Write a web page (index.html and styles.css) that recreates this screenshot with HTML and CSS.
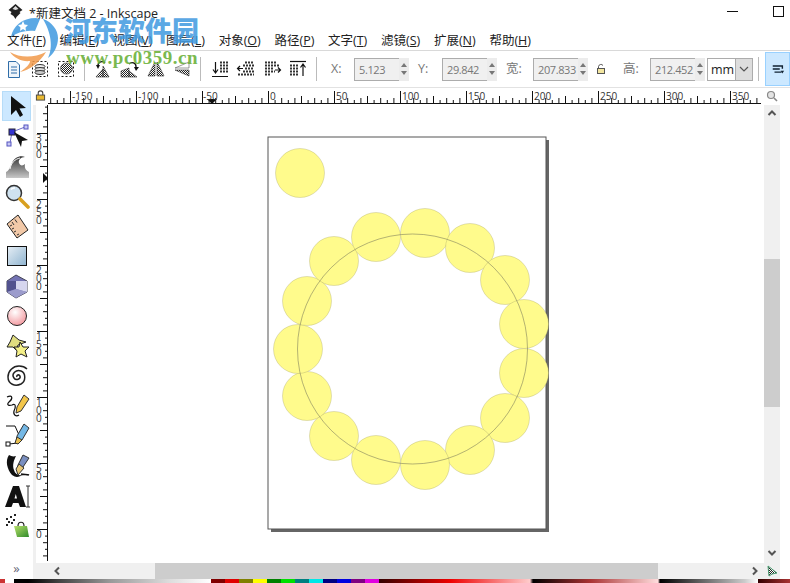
FILE: index.html
```html
<!DOCTYPE html>
<html lang="zh">
<head>
<meta charset="utf-8">
<title>新建文档 2 - Inkscape</title>
<link rel="stylesheet" href="styles.css">
</head>
<body>
<svg class="defs" width="0" height="0" aria-hidden="true">
  <defs>
    <pattern id="dith" width="2" height="2" patternUnits="userSpaceOnUse"><rect width="2" height="2" fill="#fff"/><rect width="1" height="1" fill="#222"/><rect x="1" y="1" width="1" height="1" fill="#222"/></pattern>
    <pattern id="hticks" x="268" y="88" width="66" height="17" patternUnits="userSpaceOnUse">
      <path d="M.5 3V16M7.100 12V16M13.700 10V16M20.300 12V16M26.900 10V16M33.500 8V16M40.100 12V16M46.700 10V16M53.300 12V16M59.900 10V16" stroke="#111" fill="none"/>
    </pattern>
    <pattern id="vticks" x="33" y="133" width="15" height="66" patternUnits="userSpaceOnUse">
      <path d="M4 .5H15M12 7.100H15M10 13.700H15M12 20.300H15M10 26.900H15M7 33.500H15M12 40.100H15M10 46.700H15M12 53.300H15M10 59.900H15" stroke="#111" fill="none"/>
    </pattern>
    <linearGradient id="rectg" x1="0" y1="0" x2="1" y2="1"><stop offset="0" stop-color="#e6eef5"/><stop offset="1" stop-color="#8fb4d0"/></linearGradient>
    <radialGradient id="ballg" cx=".4" cy=".3" r=".8"><stop offset="0" stop-color="#fff"/><stop offset="1" stop-color="#f28f96"/></radialGradient>
    <linearGradient id="waveg" x1="0" y1="0" x2="0" y2="1"><stop offset="0" stop-color="#333"/><stop offset="1" stop-color="#c8c8c8"/></linearGradient>
    <linearGradient id="bagg" x1="0" y1="0" x2="1" y2="1"><stop offset="0" stop-color="#b6e06a"/><stop offset="1" stop-color="#2f8a2a"/></linearGradient>
  </defs>
</svg>
<div class="app">
  <header class="titlebar">
    <svg class="applogo" viewBox="0 0 16 15"><path d="M8 0 15 6 12 8 13 9 9 13 8 15 6 12 3 10 4 8 1 6Z" fill="#222"/><path d="M5 5 8 2 11 5 8 6Z" fill="#ddd"/></svg>
    <span class="title">*新建文档 2 - Inkscape</span>
    <span class="winbtns"><i class="win-min"></i><i class="win-max"></i></span>
  </header>
  <nav class="menubar">
    <span class="menu">文件(<u>F</u>)</span>
    <span class="menu">编辑(<u>E</u>)</span>
    <span class="menu">视图(<u>V</u>)</span>
    <span class="menu">图层(<u>L</u>)</span>
    <span class="menu">对象(<u>O</u>)</span>
    <span class="menu">路径(<u>P</u>)</span>
    <span class="menu">文字(<u>T</u>)</span>
    <span class="menu">滤镜(<u>S</u>)</span>
    <span class="menu">扩展(<u>N</u>)</span>
    <span class="menu">帮助(<u>H</u>)</span>
  </nav>
  <div class="toolbar">
    <span class="tb"><svg viewBox="0 0 20 20"><path d="M4.500 2.500H12L15.500 6V18.500H4.500Z" fill="#eef4fa" stroke="#2f6da8"/><path d="M7 8H13M7 11H13M7 14H13" stroke="#2f6da8"/></svg></span>
    <span class="tb"><svg viewBox="0 0 20 20"><rect x="2.500" y="2.500" width="15" height="15" fill="none" stroke="#111" stroke-dasharray="2 2"/><ellipse cx="10" cy="7.500" rx="5" ry="2" fill="#eee" stroke="#333"/><ellipse cx="10" cy="10.500" rx="5" ry="2" fill="#ddd" stroke="#333"/><ellipse cx="10" cy="13.500" rx="5" ry="2" fill="#ccc" stroke="#333"/></svg></span>
    <span class="tb"><svg viewBox="0 0 20 20"><rect x="2.500" y="2.500" width="15" height="15" fill="none" stroke="#111" stroke-dasharray="2 2"/><ellipse cx="10.500" cy="9.500" rx="6" ry="5.500" fill="url(#dith)" stroke="#777"/></svg></span>
    <span class="tsep"></span>
    <span class="tb"><svg viewBox="0 0 22 20"><path d="M3 18 10 10V18Z M10 7 16 18H10Z" fill="url(#dith)" stroke="#333" stroke-width=".6"/><path d="M5 7A4 4 0 0 1 12 4" fill="none" stroke="#111" stroke-width="1.300"/><path d="M3 6H7L5 10Z" fill="#111"/></svg></span>
    <span class="tb"><svg viewBox="0 0 22 20"><path d="M2 18V12L10 9V18Z M10 12 18 18H10Z" fill="url(#dith)" stroke="#333" stroke-width=".6"/><path d="M10 5A4 4 0 0 1 17 8" fill="none" stroke="#111" stroke-width="1.300"/><path d="M15 8H20L17 12Z" fill="#111"/></svg></span>
    <span class="tb"><svg viewBox="0 0 20 20"><path d="M2 17 9 3V17Z" fill="url(#dith)" stroke="#333" stroke-width=".6"/><path d="M11 3 18 17H11Z" fill="url(#dith)" stroke="#333" stroke-width=".6"/></svg></span>
    <span class="tb"><svg viewBox="0 0 20 20"><path d="M3 9 17 3V9Z" fill="#fff" stroke="#555" stroke-width=".6"/><path d="M3 11 17 17V11Z" fill="url(#dith)" stroke="#333" stroke-width=".6"/></svg></span>
    <span class="tsep"></span>
    <span class="tb"><svg viewBox="0 0 20 20"><path d="M5.500 3V13M3 10.500 5.500 14 8 10.500M2 17.500H18" stroke="#111" fill="none" stroke-width="1.200"/><path d="M10 3.500H18M10 6.500H18M10 9.500H18M10 12.500H18" stroke="#333" stroke-width="2" stroke-dasharray="2 1"/></svg></span>
    <span class="tb"><svg viewBox="0 0 20 20"><path d="M7 9.500H2M4 7 1.500 9.500 4 12" stroke="#111" fill="none" stroke-width="1.200"/><path d="M9 3.500H18M7 6.500H18M9 9.500H18M7 12.500H18M2 15.500H18" stroke="#333" stroke-width="2" stroke-dasharray="2 1"/></svg></span>
    <span class="tb"><svg viewBox="0 0 20 20"><path d="M3 3.500H15M3 6.500H17M3 9.500H12M3 12.500H13M3 15.500H9" stroke="#333" stroke-width="2" stroke-dasharray="2 1"/><path d="M13 11H18M16 8.500 18.500 11 16 13.500" stroke="#111" fill="none" stroke-width="1.200"/></svg></span>
    <span class="tb"><svg viewBox="0 0 20 20"><path d="M2 2.500H18" stroke="#111" stroke-width="1.200"/><path d="M2 6.500H11M2 9.500H11M2 12.500H11M2 15.500H11" stroke="#333" stroke-width="2" stroke-dasharray="2 1"/><path d="M15 17V6M12.500 8.500 15 5 17.500 8.500" stroke="#111" fill="none" stroke-width="1.200"/></svg></span>
    <span class="tsep"></span>
    <span class="lbl lbl-x">X:</span>
    <span class="field">5.123</span><span class="spin"><i class="up"></i><i class="down"></i></span>
    <span class="lbl lbl-y">Y:</span>
    <span class="field">29.842</span><span class="spin"><i class="up"></i><i class="down"></i></span>
    <span class="lbl lbl-w">宽:</span>
    <span class="field">207.833</span><span class="spin"><i class="up"></i><i class="down"></i></span>
    <span class="lock"><svg viewBox="0 0 12 12"><path d="M3.500 5V3.500A2.500 2.500 0 0 1 8 2.500" fill="none" stroke="#555"/><rect x="2.500" y="5.500" width="7" height="5" fill="#f3e6a0" stroke="#555"/></svg></span>
    <span class="lbl lbl-h">高:</span>
    <span class="field">212.452</span><span class="spin"><i class="up"></i><i class="down"></i></span>
    <span class="combo"><span class="combo-val">mm</span><span class="combo-arrow"><svg viewBox="0 0 10 6"><path d="M1 1 5 5 9 1" fill="none" stroke="#555" stroke-width="1.200"/></svg></span></span>
    <span class="tsep tsep-end"></span>
    <span class="tb-active"><svg viewBox="0 0 16 14"><path d="M2 3H13V6M2 6.500H10M4 10H12" stroke="#123" stroke-width="1.600" fill="none"/><path d="M11 8.500H15L13 11.500Z" fill="#123"/></svg></span>
  </div>
  <main class="main">
    <aside class="toolbox">
      <span class="tool tool-active"><svg viewBox="0 0 26 26"><path d="M7 3V22L12 17 16 24 19 22 15.500 15.500 22 15Z" fill="#111"/></svg></span>
      <span class="tool"><svg viewBox="0 0 26 26"><path d="M8 9 6 20M8 9 21 4" stroke="#6a6ac8" fill="none"/><rect x="5" y="6" width="6" height="6" fill="#3434d0" stroke="#223"/><rect x="20" y="2" width="4" height="4" fill="#c8c8f4" stroke="#5555c0"/><rect x="3" y="19" width="4" height="4" fill="#c8c8f4" stroke="#5555c0"/><path d="M10 9 24 17 18 18 17 24Z" fill="#111"/></svg></span>
      <span class="tool"><svg viewBox="0 0 26 26"><path d="M2 25V19C5 18 6 14 8 10 10 5 16 2 21 4 17 4 14 7 15 10 16 13 19 13 21 11 20 16 23 18 25 19V25Z" fill="url(#waveg)"/><path d="M6 16C7 10 11 6 16 5" fill="none" stroke="#fff"/></svg></span>
      <span class="tool"><svg viewBox="0 0 26 26"><circle cx="10" cy="10" r="7.500" fill="#cfe2f0" stroke="#333" stroke-width="1.500"/><path d="M7 6.500A4.500 4.500 0 0 1 11 5" stroke="#fff" stroke-width="1.500" fill="none"/><path d="M16 16 24 24" stroke="#d8a020" stroke-width="3.600" stroke-linecap="round"/></svg></span>
      <span class="tool"><svg viewBox="0 0 26 26"><path d="M3 11 14 2 24 17 13 25Z" fill="#f2c9a8" stroke="#222"/><path d="M6 13 8 12M8 16 10 15M10 19 12 18M13 22 15 21M8 9 10 12M11 6.500 13 9.500" stroke="#333"/></svg></span>
      <span class="tool"><svg viewBox="0 0 26 26"><rect x="3.500" y="3.500" width="19" height="19" fill="url(#rectg)" stroke="#111"/></svg></span>
      <span class="tool"><svg viewBox="0 0 26 26"><path d="M12 2 23 8V19L12 25 3 19V8Z" fill="#7474b4" stroke="#445"/><path d="M12 8 23 8V19L12 16Z" fill="#d6d6ee"/><path d="M3 8 12 8V16L3 19Z" fill="#52528e"/><path d="M12 16 23 19 12 25 3 19Z" fill="#9c9ccc"/></svg></span>
      <span class="tool"><svg viewBox="0 0 26 26"><circle cx="13" cy="13" r="9.500" fill="url(#ballg)" stroke="#222"/></svg></span>
      <span class="tool"><svg viewBox="0 0 26 26"><path d="M9 2 15 7 22 9 14 12 12 17 9 14 3 14 6 9Z" fill="#e0dd80" stroke="#222"/><path d="M16 9 19 14 25 14 21 18 23 24 17 21 12 24 13 18 10 14 15 14Z" fill="#f4f088" stroke="#222"/></svg></span>
      <span class="tool"><svg viewBox="0 0 26 26"><path d="M13 14C12 12 15 11 16 13 17 16 12 18 10 15 7 11 12 6 17 8 22 10 22 18 17 21 11 24 4 21 4 14 4 8 9 3 15 3 18 3 21 4 23 6" fill="none" stroke="#222" stroke-width="1.500"/></svg></span>
      <span class="tool"><svg viewBox="0 0 26 26"><path d="M3 4C9 1 9 6 5 9 2 12 5 13 8 12 12 10 12 14 10 18 9 22 12 24 15 22" fill="none" stroke="#111" stroke-width="1.200"/><path d="M20 2 25 6 17 18 12 20 13 14Z" fill="#f3c64a" stroke="#333"/></svg></span>
      <span class="tool"><svg viewBox="0 0 26 26"><path d="M2 3H11L15 12 14 20M5 21 14 20" fill="none" stroke="#111"/><rect x="2" y="19" width="4" height="4" fill="#fff" stroke="#111"/><path d="M20 1 25 5 18 17 12 20 13 13Z" fill="#74b8e6" stroke="#333"/><path d="M13 14 18 17 14 21 11 20Z" fill="#e8c050" stroke="#333"/></svg></span>
      <span class="tool"><svg viewBox="0 0 26 26"><path d="M5 2C1 8 3 16 8 22 12 25 15 24 19 22 14 23 11 21 10 17 8 12 10 7 12 3 9 4 7 3 5 2Z" fill="#111"/><path d="M19 2 25 5 19 14 14 18 14 12Z" fill="#7a8fc0" stroke="#333"/><path d="M15 11 20 15 14 22 12 16Z" fill="#e8c878" stroke="#333"/><path d="M17 21C20 22 23 21 25 22" fill="none" stroke="#111" stroke-width="1.500"/></svg></span>
      <span class="tool"><svg viewBox="0 0 26 26"><path d="M1 24 9 3H15L22 24H16L14.500 20H9L7.500 24ZM10.500 15.500H13L11.800 11Z" fill="#111" fill-rule="evenodd"/><path d="M22 3H26M24 3V24M22 24H26" stroke="#333" fill="none"/></svg></span>
      <span class="tool"><svg viewBox="0 0 26 26"><path d="M10 13H23L25 24 13 24Z" fill="url(#bagg)"/><path d="M14 13C14 8 20 8 20 13" fill="none" stroke="#222" stroke-width="1.200"/><path d="M2 6H4M6 4H8M4 9H6M9 7H11M7 10H9M2 12H4M10 2H12" stroke="#222" stroke-width="1.800"/></svg></span>
      <span class="tool-more">&raquo;</span>
    </aside>
    <div class="workspace">
      <svg class="lockicon" viewBox="0 0 12 12"><path d="M3.500 6V3.500A2.500 2.500 0 0 1 8.500 3.500V6" fill="none" stroke="#444" stroke-width="1.200"/><rect x="1.500" y="5.500" width="9" height="5.500" fill="#e8b830" stroke="#444"/></svg>
      <svg class="hruler" viewBox="48 88 716 17">
        <rect x="48" y="88" width="713" height="16" fill="url(#hticks)"/>
        <path d="M48 103.500H761" stroke="#111"/>
        <path d="M207 99H217L212 104Z" fill="#111"/>
        <g class="rtext">
          <text x="72" y="100">-150</text><text x="138" y="100">-100</text><text x="203" y="100">-50</text><text x="270" y="100">0</text><text x="336" y="100">50</text><text x="402" y="100">100</text><text x="468" y="100">150</text><text x="534" y="100">200</text><text x="600" y="100">250</text><text x="666" y="100">300</text><text x="732" y="100">350</text>
        </g>
      </svg>
      <span class="zoomicon"><svg viewBox="0 0 12 12"><circle cx="5" cy="5" r="3.500" fill="#e4e4e4" stroke="#888" stroke-width="1.200"/><path d="M8 8 11 11" stroke="#888" stroke-width="1.600"/></svg></span>
      <svg class="vruler" viewBox="33 105 15 458">
        <rect x="33" y="105" width="15" height="456" fill="url(#vticks)"/>
        <path d="M47.500 105V561" stroke="#111"/>
        <path d="M43 173 48 178 43 183Z" fill="#111"/>
        <g class="rtext rtext-v">
          <text x="36 36 36" y="142 150 158">300</text>
          <text x="36 36 36" y="208 216 224">250</text>
          <text x="36 36 36" y="274 282 290">200</text>
          <text x="36 36 36" y="340 348 356">150</text>
          <text x="36 36 36" y="406 414 422">100</text>
          <text x="36 36" y="472 480">50</text>
          <text x="36" y="538">0</text>
        </g>
      </svg>
      <svg class="canvas" viewBox="48 105 716 458">
        <rect x="271" y="140" width="278" height="392" fill="#666"/>
        <rect x="268" y="137" width="278" height="392" fill="#fff" stroke="#555"/>
        <g class="dots">
          <circle cx="300" cy="173" r="24.500"/>
          <circle cx="425" cy="233" r="24.500"/><circle cx="470" cy="248" r="24.500"/><circle cx="505" cy="280" r="24.500"/><circle cx="524" cy="324" r="24.500"/><circle cx="524" cy="373" r="24.500"/><circle cx="505" cy="418" r="24.500"/><circle cx="470" cy="450" r="24.500"/><circle cx="425" cy="465" r="24.500"/><circle cx="376" cy="460" r="24.500"/><circle cx="334" cy="436" r="24.500"/><circle cx="307" cy="396" r="24.500"/><circle cx="298" cy="349" r="24.500"/><circle cx="307" cy="301" r="24.500"/><circle cx="334" cy="261" r="24.500"/><circle cx="376" cy="237" r="24.500"/>
        </g>
        <circle class="ring" cx="412.500" cy="349" r="115"/>
      </svg>
      <div class="vscroll">
        <svg class="arrow" viewBox="0 0 10 8"><path d="M1.500 6 5 2.500 8.500 6" fill="none" stroke="#555" stroke-width="2"/></svg>
        <span class="vtrack"><i class="vthumb"></i></span>
        <svg class="arrow" viewBox="0 0 10 8"><path d="M1.500 2 5 5.500 8.500 2" fill="none" stroke="#555" stroke-width="2"/></svg>
      </div>
      <div class="hscroll">
        <svg class="harrow" viewBox="0 0 8 10"><path d="M6 1.500 2.500 5 6 8.500" fill="none" stroke="#555" stroke-width="2"/></svg>
        <span class="htrack"><i class="hthumb"></i></span>
        <svg class="harrow" viewBox="0 0 8 10"><path d="M2 1.500 5.500 5 2 8.500" fill="none" stroke="#555" stroke-width="2"/></svg>
      </div>
      <span class="corner"><svg viewBox="0 0 12 12"><path d="M2 1 11 8 6 9 3 11Z" fill="url(#dith)" stroke="#4a9a70"/></svg></span>
    </div>
  </main>
  <div class="palette"></div>
  <div class="watermark">
    <svg class="wm-logo" viewBox="0 0 60 75"><path d="M11 37C13 26 22 18 36 18L40 19 35 31C26 30 18 32 11 37Z" fill="#3f9ae0"/><path d="M43 19C52 22 58 30 58 38 58 46 54 54 48 58 52 50 53 36 43 19Z" fill="#3f9ae0"/><path d="M23 21 24.500 24.500 28 25 25.500 27.500 26 31 23 29 20 31 20.500 27.500 18 25 21.500 24.500Z" fill="#fff"/><path d="M10 52C20 58 34 58 46 52 40 62 30 70 20 72 26 68 30 64 30 61 22 62 14 58 10 52Z" fill="#f19a4a"/></svg>
    <span class="wm-cn">河东软件园</span>
    <span class="wm-url">www.pc0359.cn</span>
  </div>
</div>
</body>
</html>
```
FILE: styles.css
```css
* { box-sizing: border-box; }
html, body { margin: 0; padding: 0; }
body { background: #fff; font-family: "Open Sans", "Noto Sans CJK SC", sans-serif; color: #111; overflow: hidden; }
.defs { position: absolute; }
.app { position: relative; width: 790px; height: 583px; display: flex; flex-direction: column; overflow: hidden; }

.titlebar { height: 26px; display: flex; align-items: center; padding-left: 7px; }
.applogo { width: 17px; height: 15px; margin-top: -3px; }
.title { margin-left: 5px; font-size: 12.500px; margin-top: -1px; color: #222; white-space: nowrap; }
.winbtns { margin-left: auto; display: flex; align-items: center; margin-top: -3px; }
.win-min { display: block; width: 11px; height: 1px; background: #111; margin-right: 35px; }
.win-max { display: block; width: 11px; height: 11px; border: 1px solid #111; margin-right: 6px; }

.menubar { height: 25px; display: flex; align-items: center; gap: 13.700px; padding: 2px 0 0 7px; border-bottom: 1px solid #d9d9d9; font-size: 12.500px; }
.menu { white-space: nowrap; color: #222; }
.menu u { text-underline-offset: 1px; }

.toolbar { height: 37px; display: flex; align-items: center; padding-left: 1px; border-bottom: 1px solid #e2e2e2; font-size: 13px; }
.tb { width: 26px; height: 24px; display: flex; align-items: center; justify-content: center; }
.tb svg { width: 22px; height: 20px; }
.tsep { width: 1px; height: 24px; background: #bbb; margin: 0 6px 0 5px; }
.lbl { color: #777; display: block; height: 20px; line-height: 20px; font-size: 12.500px; }
.lbl-x { width: 31px; padding-left: 8px; }
.lbl-y { width: 33px; padding-left: 9px; }
.lbl-w { width: 36px; padding-left: 9px; white-space: nowrap; }
.lbl-h { width: 27px; white-space: nowrap; }
.field { width: 45px; height: 23px; line-height: 21px; padding-left: 4px; background: #f0f0f0; border: 1px solid #acacac; border-right: 0; color: #777; font-size: 11px; letter-spacing: -.4px; overflow: hidden; white-space: nowrap; }
.spin { width: 10px; height: 23px; display: flex; flex-direction: column; background: #ececec; align-items: center; justify-content: space-around; padding: 3px 0; }
.spin i { display: block; width: 0; height: 0; border-left: 3px solid transparent; border-right: 3px solid transparent; }
.spin .up { border-bottom: 4px solid #777; }
.spin .down { border-top: 4px solid #777; }
.lock { width: 35px; height: 14px; padding-left: 7px; display: flex; }
.lock svg { width: 12px; height: 12px; margin-top: 1px; }
.combo { margin-left: 2px; width: 46px; height: 23px; display: flex; border: 1px solid #acacac; background: #fff; }
.combo-val { width: 27px; line-height: 21px; padding-left: 3px; font-size: 12.500px; color: #222; }
.combo-arrow { flex: 1; background: #ddd; border-left: 1px solid #acacac; display: flex; align-items: center; justify-content: center; }
.combo-arrow svg { width: 10px; height: 6px; }
.tsep-end { margin: 0 6px 0 5px; }
.tb-active { flex: 1; height: 34px; background: #cce8ff; border: 1px solid #99d1ff; display: flex; align-items: center; justify-content: center; }
.tb-active svg { width: 14px; height: 13px; }

.main { flex: 1; display: flex; min-height: 0; }
.toolbox { width: 33px; display: flex; flex-direction: column; align-items: center; padding-top: 3px; padding-bottom: 3px; }
.tool { width: 29px; height: 30px; flex: none; display: flex; align-items: center; justify-content: center; }
.tool svg { width: 26px; height: 26px; }
.tool-active { background: #cce8ff; border: 1px solid #b6dcf8; }
.tool-more { margin-top: auto; font-size: 13px; color: #667; line-height: 16px; }

.workspace { flex: 1; display: grid; grid-template-columns: 15px 716px 16px 10px; grid-template-rows: 17px 458px 16px; background: #fff; }
.lockicon { width: 11px; height: 11px; justify-self: end; margin: 2px 2px 0 0; }
.hruler { grid-column: 2 / 3; width: 716px; height: 17px; display: block; }
.zoomicon { grid-column: 3 / 5; display: block; padding: 2px 0 0 2px; }
.zoomicon svg { width: 12px; height: 12px; display: block; }
.vruler { width: 15px; height: 458px; display: block; background: linear-gradient(90deg, #f0f0f0 3px, #fff 3px); }
.canvas { width: 716px; height: 458px; display: block; }
.rtext text { font-family: "Open Sans", sans-serif; font-size: 10px; fill: #333; }
.dots circle { fill: #fffb8c; stroke: #9a9760; stroke-opacity: .3; stroke-width: 1; }
.ring { fill: none; stroke: #77775a; stroke-opacity: .55; stroke-width: 1; }

.vscroll { background: #f0f0f0; display: flex; flex-direction: column; align-items: center; padding: 4px 0 6px; }
.arrow { width: 10px; height: 8px; flex: none; }
.vtrack { flex: 1; width: 100%; display: flex; flex-direction: column; padding-top: 142px; }
.vthumb { display: block; height: 148px; background: #cdcdcd; }

.hscroll { grid-column: 1 / 3; grid-row: 3; background: #f0f0f0; display: flex; align-items: center; padding: 0 5px 0 20px; }
.harrow { width: 8px; height: 10px; flex: none; }
.htrack { flex: 1; height: 16px; padding-left: 94px; padding-right: 93px; }
.hthumb { display: block; height: 16px; background: #cdcdcd; }
.corner { grid-column: 3; grid-row: 3; background: #f0f0f0; display: flex; align-items: center; justify-content: center; }
.corner svg { width: 12px; height: 12px; }

.palette { height: 4px; background: linear-gradient(90deg, #c33 0 5px, #fff 5px 14px, #000 14px 28px, #444 60px, #999 110px, #ddd 170px, #fff 211px, #800000 211px 225px, #e00000 225px 239px, #808000 239px 253px, #ffff00 253px 267px, #008000 267px 281px, #00e000 281px 295px, #008080 295px 309px, #00e8e8 309px 323px, #000080 323px 337px, #0000e0 337px 351px, #800080 351px 365px, #e000e0 365px 379px, #300 379px, #e00 450px, #fcc 530px, #000 533px, #a33 590px, #fdd 658px, #000 660px, #ccc 745px, #fff 758px, #300 758px, #a33 790px); }

.watermark { position: absolute; left: 0; top: 0; width: 215px; height: 82px; pointer-events: none; }
.wm-logo { position: absolute; left: 0; top: 0; width: 60px; height: 75px; opacity: .85; }
.wm-cn { position: absolute; left: 64px; top: 10px; font-family: "Noto Sans CJK SC", sans-serif; font-weight: 900; font-size: 27px; line-height: 40px; color: #3f9ae0; opacity: .85; white-space: nowrap; }
.wm-url { position: absolute; left: 66px; top: 47px; font-family: "Liberation Serif", serif; font-weight: 700; font-size: 19px; letter-spacing: .5px; line-height: 22px; color: #6db23c; opacity: .9; white-space: nowrap; }
```
